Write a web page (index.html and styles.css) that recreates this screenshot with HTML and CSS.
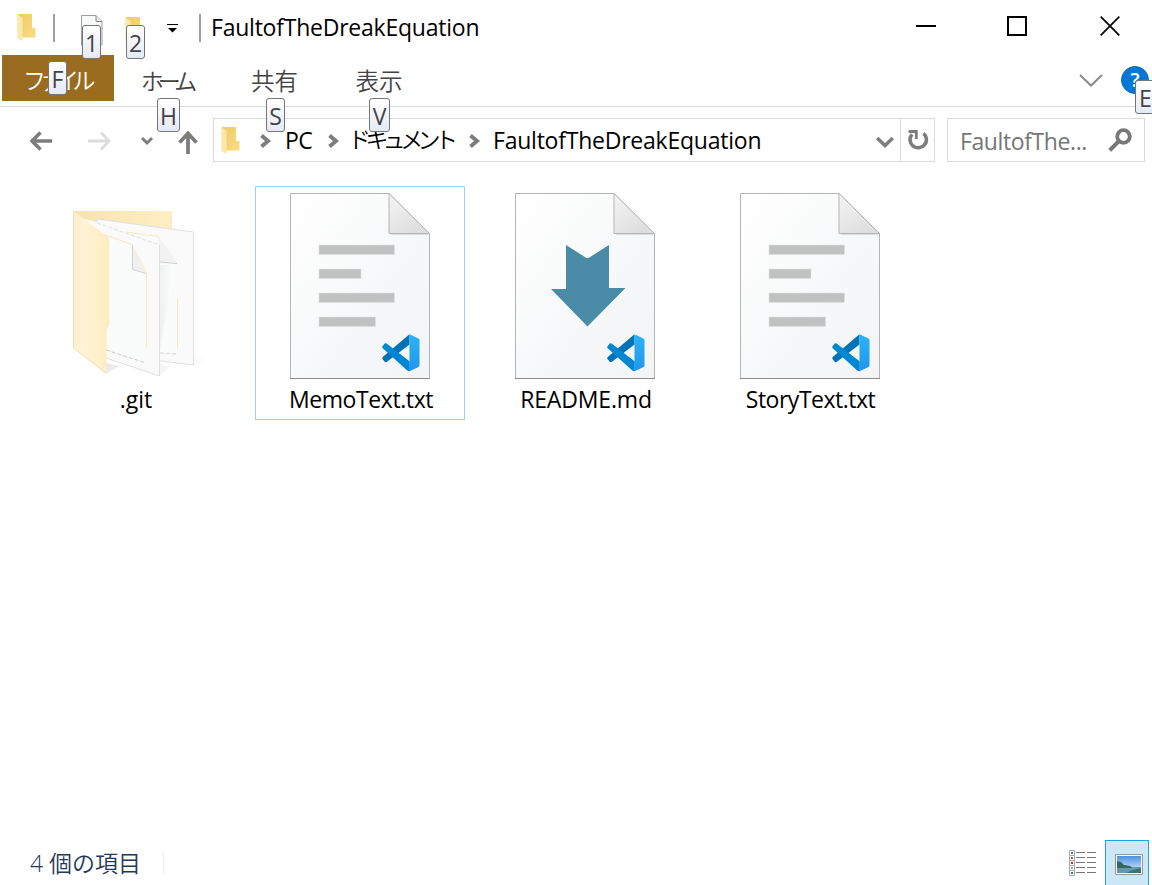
FILE: index.html
```html
<!DOCTYPE html>
<html lang="ja">
<head>
<meta charset="utf-8">
<title>FaultofTheDreakEquation</title>
<link rel="stylesheet" href="styles.css">
</head>
<body>
<svg class="defs" width="0" height="0" aria-hidden="true">
  <defs>
    <linearGradient id="paper" x1="0" y1="0" x2="1" y2="1"><stop offset="0" stop-color="#fff"/><stop offset=".55" stop-color="#f7f8f9"/><stop offset="1" stop-color="#f3f4f6"/></linearGradient>
    <linearGradient id="curl" x1="0" y1="0" x2=".6" y2="1"><stop offset="0" stop-color="#f5f5f5"/><stop offset="1" stop-color="#dedede"/></linearGradient>
    <linearGradient id="flap" x1="0" y1="0" x2="1" y2="0"><stop offset="0" stop-color="#fff0cb"/><stop offset=".3" stop-color="#fff3d5"/><stop offset="1" stop-color="#feedc2"/></linearGradient>
    <linearGradient id="back" x1="0" y1="0" x2="1" y2="0"><stop offset="0" stop-color="#f8e3ae"/><stop offset="1" stop-color="#feefc3"/></linearGradient>
    <linearGradient id="gold" x1="0" y1="0" x2="1" y2="1"><stop offset="0" stop-color="#efcb69"/><stop offset="1" stop-color="#fbdc83"/></linearGradient>
    <linearGradient id="blade" x1="0" y1="0" x2="0" y2="1"><stop offset="0" stop-color="#2bb3f5"/><stop offset="1" stop-color="#2196ed"/></linearGradient>
    <linearGradient id="shade" x1="0" y1="0" x2="1" y2="0"><stop offset="0" stop-color="#dcdcdc"/><stop offset="1" stop-color="#fff"/></linearGradient>
    <linearGradient id="sky" x1="0" y1="0" x2="0" y2="1"><stop offset="0" stop-color="#4c90e3"/><stop offset="1" stop-color="#e5f6fd"/></linearGradient>
  </defs>
  <symbol id="folder" viewBox="0 0 19 28">
    <path d="M1 0H15V14H18.500V23.500H6L1 24Z" fill="url(#gold)"/>
    <path d="M.3.300 5.500 4V25.500L5 27.300.3 24Z" fill="#fee8a9"/>
  </symbol>
  <symbol id="vscode" viewBox="0 0 38 38">
    <path d="M27.500.300 1 22.800Q-.3 24 .7 25.300L2.700 27.800Q3.500 28.700 4.600 27.900L27.500 10.500Z" fill="#0072b8"/>
    <path d="M1 14.500Q-.3 13.300.7 12.100L2.700 9.600Q3.500 8.900 4.600 9.600L27.800 27.500V37.300Q26 37.300 25 36.200Z" fill="#0087d1"/>
    <path d="M27.500.200 36 4.200Q37.500 5 37.500 6.300V31.200Q37.500 32.500 36 33.200L27.500 37.300Z" fill="url(#blade)"/>
  </symbol>
  <symbol id="file" viewBox="0 0 208 192">
    <path d="M34.500 6.500H133L173.500 46.500V191.500H34.500Z" fill="url(#paper)" stroke="#b3b5b5"/>
    <path d="M34 191.500H174" stroke="#8b8b8b"/>
    <path d="M135 47.500H172" stroke="#dedede"/>
    <path d="M133 6.500V46.500H173.500Z" fill="url(#curl)" stroke="#b5b5b5"/>
    <use href="#vscode" x="126" y="147" width="38" height="38"/>
  </symbol>
  <symbol id="lines" viewBox="0 0 208 192">
    <path d="M63 58H138.500V67.500H63ZM63 82H105V91.500H63ZM63 106H138.500V115.500H63ZM63 130H119.500V139.500H63Z" fill="#c0c2c1" stroke="#dfe0e0" stroke-width=".6"/>
  </symbol>
</svg>

<div class="window">
  <header class="titlebar">
    <svg class="app-icon" width="19" height="28"><use href="#folder"/></svg>
    <i class="divider"></i>
    <span class="quick quick-props">
      <svg width="22" height="34"><path d="M.5.500H15L21 6.500V30H.5Z" fill="#f7f8f8" stroke="#9c9f9f"/><path d="M15 .5V6.500H21" fill="#e7e7e7" stroke="#888"/></svg>
      <kbd class="tip tip-1">1</kbd>
    </span>
    <span class="quick quick-new">
      <svg width="19" height="28"><use href="#folder"/></svg>
      <kbd class="tip tip-2">2</kbd>
    </span>
    <svg class="customize" width="11" height="9"><path d="M0 .5H11" stroke="#000"/><path d="M1 4H10L5.500 8.500Z"/></svg>
    <i class="divider divider-title"></i>
    <h1 class="title">FaultofTheDreakEquation</h1>
    <div class="controls">
      <svg width="20" height="20"><path d="M0 10H20" stroke="#000" stroke-width="2"/></svg>
      <svg width="20" height="20"><path d="M1 1H19V19H1Z" fill="none" stroke="#000" stroke-width="2"/></svg>
      <svg width="20" height="20"><path d="M.7.700 19.300 19.300M19.300.700.7 19.300" stroke="#000" stroke-width="1.700"/></svg>
    </div>
  </header>

  <nav class="ribbon">
    <span class="tab tab-file"><b>ファイル</b><kbd class="tip tip-f">F</kbd></span>
    <span class="tab tab-home"><b>ホーム</b><kbd class="tip tip-h">H</kbd></span>
    <span class="tab tab-share"><b>共有</b><kbd class="tip tip-s">S</kbd></span>
    <span class="tab tab-view"><b>表示</b><kbd class="tip tip-v">V</kbd></span>
    <svg class="expand" width="24" height="13"><path d="M1 1 12 11.500 23 1" fill="none" stroke="#8b8b8b" stroke-width="2"/></svg>
    <span class="help">?<kbd class="tip tip-e">E</kbd></span>
  </nav>

  <div class="navbar">
    <svg class="arrows" width="170" height="24" fill="none" stroke="#7d7d7d">
      <path d="M22 11H3M10.500 2.500 2 11 10.500 19.500" stroke-width="3.600"/>
      <path d="M58 11H79M71 2.500 79 11 71 19.500" stroke="#dcdcdc" stroke-width="2.800"/>
      <path d="M112 8 117 13 122 8" stroke-width="3"/>
      <path d="M158 24V4M149.500 12.500 158 3.500 166.500 12.500" stroke-width="3.800"/>
    </svg>
    <div class="address">
      <svg class="address-icon" width="19" height="28"><use href="#folder"/></svg>
      <svg class="crumb" width="11" height="14"><path d="M1.500 1.500 8 7 1.500 12.500"/></svg>
      <span class="path path-pc">PC</span>
      <svg class="crumb" width="11" height="14"><path d="M1.500 1.500 8 7 1.500 12.500"/></svg>
      <span class="path path-docs">ドキュメント</span>
      <svg class="crumb" width="11" height="14"><path d="M1.500 1.500 8 7 1.500 12.500"/></svg>
      <span class="path path-current">FaultofTheDreakEquation</span>
      <svg class="history" width="18" height="12"><path d="M1.200 2 9 9.500 16.800 2" fill="none" stroke="#7d7d7d" stroke-width="3.500"/></svg>
      <span class="refresh"><svg width="22" height="23"><path d="M16.500 4.300A8.200 8.200 0 1 1 5 5.300" fill="none" stroke="#7d7d7d" stroke-width="3.600"/><path d="M1.500 2.500H9.300V10" fill="none" stroke="#7d7d7d" stroke-width="2.800"/></svg></span>
    </div>
    <div class="search">
      <span>FaultofThe...</span>
      <svg width="24" height="24"><circle cx="15.500" cy="8.500" r="6.300" fill="none" stroke="#777" stroke-width="3.800"/><path d="M10.500 13.500 1.700 22.300" stroke="#777" stroke-width="4"/></svg>
    </div>
  </div>

  <main class="files">
    <figure class="item">
      <svg width="208" height="192" viewBox="31 187 208 192">
        <path d="M193 354 213 358 193 366ZM106 363 120 366 106 374ZM159 363 170 367 159 376Z" fill="url(#shade)" opacity=".6"/>
        <path d="M73 211H171L172 212V300H73Z" fill="url(#back)"/>
        <path d="M97 219 193.500 232V365L97 353Z" fill="#fafafa" stroke="#e0e0e0"/>
        <path d="M125 232 158 236 177 264V354L125 350Z" fill="#fafcfc"/>
        <path d="M125 232 158 236.500 177 264" fill="none" stroke="#fce9b8"/>
        <path d="M177.500 298V348" stroke="#fce9b8"/>
        <path d="M160 353 177 354" stroke="#d6d6d6" stroke-dasharray="4 2"/>
        <path d="M160 262H177L158 236Z" fill="#f2f2f2"/><path d="M160 262 177 263.500" stroke="#ccc"/>
        <path d="M160 265H174L160 350Z" fill="url(#shade)" opacity=".35"/>
        <path d="M84 219 100 223 159.500 245V376L106 358Z" fill="#fafafa"/>
        <path d="M97 223 159.500 245" fill="none" stroke="#dfdfdf" stroke-dasharray="4 2"/>
        <path d="M159.500 245V376L106 358" fill="none" stroke="#dfdfdf"/>
        <path d="M101 234 132 244.500 146 273V362L106 350Z" fill="#fafcfc"/>
        <path d="M101 233.500 132 244.500 146.500 273V347" fill="none" stroke="#fce9b8"/>
        <path d="M106 350 146 363" stroke="#ccc" stroke-dasharray="4 2"/>
        <path d="M132.500 245V269.500L146 273Z" fill="#f0f0f0"/><path d="M132.500 245V269.500L146 273.500" fill="none" stroke="#d2d2d2"/>
        <path d="M73 211 84 219 108 237Q109.500 239 109.500 242V324Q109 327 106.500 330V374L73 348Z" fill="url(#flap)"/>
        <path d="M73.500 212V348L106 373.500" fill="none" stroke="#ece0c2"/>
      </svg>
      <figcaption class="n-git">.git</figcaption>
    </figure>
    <figure class="item item-focused">
      <svg width="208" height="192"><use href="#file"/><use href="#lines"/></svg>
      <figcaption class="n-memo">MemoText.txt</figcaption>
    </figure>
    <figure class="item">
      <svg width="208" height="192"><use href="#file"/><path d="M85 58 105 70.700Q106.500 71.500 108 70.700L128 58V101H144.500L106.500 139.500 70 102H85Z" fill="#4a8ba7"/></svg>
      <figcaption class="n-readme">README.md</figcaption>
    </figure>
    <figure class="item">
      <svg width="208" height="192"><use href="#file"/><use href="#lines"/></svg>
      <figcaption class="n-story">StoryText.txt</figcaption>
    </figure>
  </main>

  <footer class="status">
    <span class="count">4 個の項目</span>
    <i class="status-divider"></i>
    <svg class="details" width="28" height="27">
      <g fill="#fff" stroke="#a8a8a8"><path d="M.5.500H5.500V5.500H.5ZM.5 5.500H5.500V10.500H.5ZM.5 10.500H5.500V15.500H.5ZM.5 15.500H5.500V20.500H.5ZM.5 20.500H5.500V25.500H.5Z"/></g>
      <path d="M2 2h2v2H2ZM2 22h2v2H2Z" fill="#337caa"/><path d="M2 7h2v2H2Z" fill="#75794a"/><path d="M2 12h2v2H2Z" fill="#c92020"/><path d="M2 17h2v2H2Z" fill="#85ad9c"/>
      <path d="M7 2.500h9m2 0h9M7 7.500h9m2 0h9M7 12.500h9m2 0h9M7 17.500h9m2 0h9M7 22.500h9m2 0h9" stroke="#777"/>
    </svg>
    <span class="large">
      <svg width="28" height="21"><path d="M.5.500H27.500V20.500H.5Z" fill="#fff" stroke="#999"/><path d="M2 2H26V19H2Z" fill="url(#sky)"/><path d="M2 11 8 11 13 12 18 13H26V19H2Z" fill="#6797b2"/><path d="M2 7 6 8 9 11 15 12 17 14H2Z" fill="#32675b"/><path d="M26 14V19H11L18 16Z" fill="#3c746c"/></svg>
    </span>
  </footer>
</div>
</body>
</html>
```
FILE: styles.css
```css
* { box-sizing: border-box; }
body { margin: 0; background: #fff; color: #000; font: 23px/32px "Open Sans", "Noto Sans CJK JP", sans-serif; overflow: hidden; }
svg { display: block; flex: none; }
.defs { position: absolute; }
.window { display: flex; flex-direction: column; width: 1152px; height: 885px; white-space: nowrap; }

.titlebar { display: flex; align-items: flex-start; flex: none; height: 55px; padding: 14px 32px 0 17px; }
.divider { width: 2px; height: 28px; margin-left: 17px; background: #a0a0a0; }
.quick { position: relative; flex: none; }
.quick-props { margin: 1px 0 0 26px; }
.quick-new { margin: 3px 0 0 22px; }
.customize { margin: 10px 0 0 23px; }
.divider-title { margin-left: 21px; }
.title { margin: -3px 0 0 10px; font-size: 23px; line-height: 32px; font-weight: 400; letter-spacing: -.23px; }
.controls { display: flex; gap: 73px; margin: 2px 0 0 auto; }
.controls svg:nth-child(2) { margin-left: -2px; }

.tip { position: absolute; z-index: 2; width: 19px; height: 34px; border: 1px solid #767676; border-radius: 3px; background: linear-gradient(#fff, #e4eaf5); color: #444; font: 23px/34px "Open Sans", sans-serif; display: flex; justify-content: center; }
.tip-1 { left: 1px; top: 10px; }
.tip-2 { left: 1px; top: 8px; }
.tip-f { left: 46px; top: 6px; }
.tip-h { left: 43px; top: 43px; width: 23px; }
.tip-s { left: 49px; top: 43px; }
.tip-v { left: 42px; top: 43px; width: 21px; }
.tip-e { left: 13px; top: 13px; width: 21px; }

.ribbon { display: flex; flex: none; height: 52px; padding-left: 2px; border-bottom: 1px solid #d9dadb; }
.tab { position: relative; display: flex; justify-content: center; height: 46px; padding-top: 9px; color: #444; font-family: "Noto Sans CJK JP", sans-serif; }
.tab b { font-weight: 350; }
.tab-file { width: 112px; padding-top: 8px; background: #9a6c1f; color: #fff; }
.tab-file b { letter-spacing: -6.500px; padding-right: 4px; }
.tab-home { width: 103px; }
.tab-home b { letter-spacing: -6px; padding-left: 1px; }
.tab-share { width: 110px; padding-left: 5px; }
.tab-view { width: 104px; }
.tab-share b, .tab-view b { font-size: 23.500px; }
.expand { margin: 19px 0 0 648px; }
.help { position: relative; flex: none; width: 28px; height: 28px; margin: 11px 0 0 18px; border: 1px solid #1568b3; border-radius: 50%; background: #0078d7; color: #fff; text-align: center; font-size: 20px; line-height: 25px; font-weight: 600; }

.navbar { display: flex; flex: none; height: 79px; padding: 11px 7px 0 30px; }
.arrows { margin: 12px 13px 0 0; }
.address { display: flex; align-items: center; width: 722px; height: 44px; border: 1px solid #d9d9d9; }
.address-icon { margin-left: 7px; margin-top: 2px; }
.crumb { fill: none; stroke: #7d7d7d; stroke-width: 4; margin-top: 1px; }
.address-icon + .crumb { margin-left: 20px; }
.path { flex: none; }
.path-pc { width: 43px; margin-left: 14px; letter-spacing: -.5px; }
.path-docs { width: 118px; margin: -4px 0 0 9px; padding-right: 4px; font-family: "Noto Sans CJK JP", sans-serif; font-weight: 350; letter-spacing: -5.600px; }
.path-docs + .crumb { margin-left: 3px; }
.path-current { margin-left: 13px; letter-spacing: -.23px; }
.history { margin: 3px 6px 0 auto; }
.refresh { display: flex; align-items: center; justify-content: center; width: 34px; height: 42px; padding-left: 1px; border-left: 1px solid #d9d9d9; }
.search { display: flex; align-items: center; justify-content: space-between; width: 198px; height: 44px; margin-left: 12px; padding: 0 12px 0 12px; border: 1px solid #d9d9d9; color: #767676; }
.search span { padding-top: 1px; letter-spacing: -.4px; }

.files { display: flex; gap: 15px; flex: 1; padding-left: 30px; }
.item { width: 210px; height: 234px; margin: 0; border: 1px solid transparent; text-align: center; }
.item svg { overflow: visible; }
.item-focused { border-color: #99d1f6; }
.item figcaption { margin-top: 4px; line-height: 32px; }
.n-git { padding-left: 2px; }
.n-memo { letter-spacing: -.4px; padding-left: 2px; }
.n-readme { letter-spacing: -.15px; padding-left: 2px; }
.n-story { letter-spacing: -.5px; padding-left: 1px; }

.status { display: flex; align-items: flex-start; flex: none; height: 45px; padding: 0 3px 0 30px; color: #1e395b; }
.count { width: 134px; padding-top: 7px; font-weight: 350; }
.status-divider { width: 1px; height: 22px; margin-top: 12px; margin-left: -1px; background: #eee; }
.details { margin: 10px 8px 0 auto; }
.large { width: 44px; height: 45px; padding: 13px 0 0 9px; border: 1px solid #26a0da; border-bottom: 0; background: #cce8f7; }
```
